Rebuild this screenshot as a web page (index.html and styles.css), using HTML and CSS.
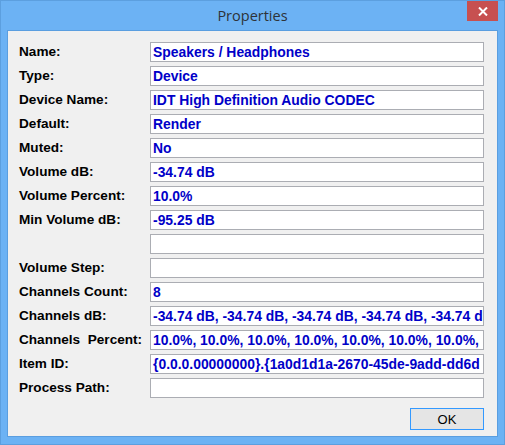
FILE: index.html
```html
<!DOCTYPE html>
<html>
<head>
<meta charset="utf-8">
<link rel="stylesheet" href="styles.css">
</head>
<body>
<div class="window">
  <div class="titlebar">
    <span class="title">Properties</span>
    <button class="close" aria-label="Close"><svg width="10" height="9" viewBox="0 0 10 9"><path d="M1 0.5 L9 8.5 M9 0.5 L1 8.5" stroke="#fff" stroke-width="2"/></svg></button>
  </div>
  <div class="client">
    <div class="grid">
      <div class="label">Name:</div><div class="field">Speakers / Headphones</div>
      <div class="label">Type:</div><div class="field">Device</div>
      <div class="label">Device Name:</div><div class="field">IDT High Definition Audio CODEC</div>
      <div class="label">Default:</div><div class="field">Render</div>
      <div class="label">Muted:</div><div class="field">No</div>
      <div class="label">Volume dB:</div><div class="field">-34.74 dB</div>
      <div class="label">Volume Percent:</div><div class="field">10.0%</div>
      <div class="label">Min Volume dB:</div><div class="field">-95.25 dB</div>
      <div class="label"></div><div class="field"></div>
      <div class="label">Volume Step:</div><div class="field"></div>
      <div class="label">Channels Count:</div><div class="field">8</div>
      <div class="label">Channels dB:</div><div class="field">-34.74 dB, -34.74 dB, -34.74 dB, -34.74 dB, -34.74 d</div>
      <div class="label">Channels  Percent:</div><div class="field">10.0%, 10.0%, 10.0%, 10.0%, 10.0%, 10.0%, 10.0%,</div>
      <div class="label">Item ID:</div><div class="field">{0.0.0.00000000}.{1a0d1d1a-2670-45de-9add-dd6d</div>
      <div class="label">Process Path:</div><div class="field"></div>
    </div>
    <div class="actions">
      <button class="ok">OK</button>
    </div>
  </div>
</div>
</body>
</html>
```
FILE: styles.css
```css
* { box-sizing: border-box; }
html, body { margin: 0; padding: 0; }
body { width: 505px; height: 445px; overflow: hidden; background: #6cb2f4; }
.window {
  width: 505px;
  height: 445px;
  background: #6cb2f4;
  border: 1px solid #5c9fdf;
  display: flex;
  flex-direction: column;
}
.titlebar {
  height: 29px;
  position: relative;
  display: flex;
  align-items: center;
  justify-content: center;
}
.title {
  font-family: "Open Sans", "Noto Sans", sans-serif;
  font-size: 14.5px;
  color: #2e3338;
  margin-top: -1px;
}
.close {
  position: absolute;
  right: 6px;
  top: 0;
  width: 31px;
  height: 20px;
  border: 0;
  padding: 0;
  background: #c75050;
  display: flex;
  align-items: center;
  justify-content: center;
}
.client {
  margin: 0 6px 0 6px;
  height: 407px;
  background: #f0f0f0;
  border: 1px solid #5a9ee0;
  padding: 11px 13px 0 11px;
}
.grid {
  display: grid;
  grid-template-columns: 131px 334px;
  grid-auto-rows: 20px;
  row-gap: 4px;
}
.label, .field {
  font-family: "Liberation Sans", Arial, sans-serif;
  font-weight: bold;
  font-size: 13.6px;
  line-height: 18px;
  white-space: pre;
}
.label {
  color: #000;
  padding-top: 1px;
}
.field {
  font-size: 13.9px;
  background: #fff;
  border: 1px solid #abadb3;
  color: #0000c8;
  padding: 0 2px;
  overflow: hidden;
}
.actions {
  display: flex;
  justify-content: flex-end;
  margin-top: 10px;
}
.ok {
  width: 74px;
  height: 22px;
  background: #e5e5e5;
  border: 1px solid #3399ff;
  font-family: "Liberation Sans", Arial, sans-serif;
  font-size: 13px;
  color: #000;
  padding: 0;
}
```
